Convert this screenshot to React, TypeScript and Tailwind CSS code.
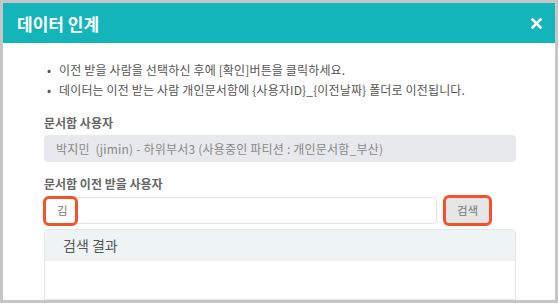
import React from "react";

export default function App() {
  const font = { fontFamily: '"Noto Sans CJK KR", "Noto Sans", sans-serif' };
  return (
    <div className="w-[559px] h-[304px] bg-white overflow-hidden" style={font}>
      <div className="w-[558px] h-[303px] border-[3px] border-[#c6c6c6] bg-white flex flex-col overflow-hidden">
        <div className="h-[40px] bg-[#13b5bb] flex items-center justify-between pl-[14px] pr-[12px] shrink-0">
          <span className="text-white font-bold text-[17px] leading-none">데이터 인계</span>
          <svg width="13" height="13" viewBox="0 0 12 12">
            <path d="M1.5 1.5 L10.5 10.5 M10.5 1.5 L1.5 10.5" stroke="white" strokeWidth="2.6" strokeLinecap="butt" />
          </svg>
        </div>
        <div className="flex-1 pl-[41px] pr-[39px] pt-[17px] flex flex-col">
          <ul className="text-[12px] text-[#555] leading-[20px] tracking-[0.15px]">
            <li className="flex items-center pl-[3px]">
              <span className="w-[12px] text-[12px] leading-none">•</span>
              <span>이전 받을 사람을 선택하신 후에 [확인]버튼을 클릭하세요.</span>
            </li>
            <li className="flex items-center pl-[3px]">
              <span className="w-[12px] text-[12px] leading-none">•</span>
              <span>데이터는 이전 받는 사람 개인문서함에 {"{사용자ID}_{이전날짜}"} 폴더로 이전됩니다.</span>
            </li>
          </ul>
          <div className="mt-[14px] text-[12px] leading-[18px] font-bold text-[#666]">문서함 사용자</div>
          <div className="mt-[3px] h-[27px] rounded-[4px] bg-[#e8e9ec] flex items-center pl-[12px] text-[12px] tracking-[0.2px] text-[#888]">
            <span className="whitespace-pre">박지민  (jimin) - 하위부서3 (사용중인 파티션 : 개인문서함_부산)</span>
          </div>
          <div className="mt-[13px] text-[12px] leading-[18px] font-bold text-[#666]">문서함 이전 받을 사용자</div>
          <div className="mt-[2px] flex items-center h-[31px]">
            <div className="relative w-[393px] h-[27px] border border-[#e3e3e3] rounded-[4px] flex items-center pl-[12px] text-[11.5px] text-[#777]">
              <span>김</span>
              <div className="absolute left-[-2px] top-[-2px] w-[35px] h-[30px] border-[3px] border-[#f5522a] rounded-[6px]" />
            </div>
            <button className="ml-[6px] w-[49px] h-[31px] border-[3px] border-[#f5522a] rounded-[6px] bg-[#e6e6e6] text-[11.5px] text-[#777] flex items-center justify-center">
              검색
            </button>
          </div>
          <div className="mt-[3px] flex-1 border border-[#e3e7e7] rounded-t-[4px] flex flex-col">
            <div className="h-[31px] bg-[#eef3f3] flex items-center pl-[18px] text-[14px] text-[#555]">검색 결과</div>
          </div>
        </div>
      </div>
    </div>
  );
}
